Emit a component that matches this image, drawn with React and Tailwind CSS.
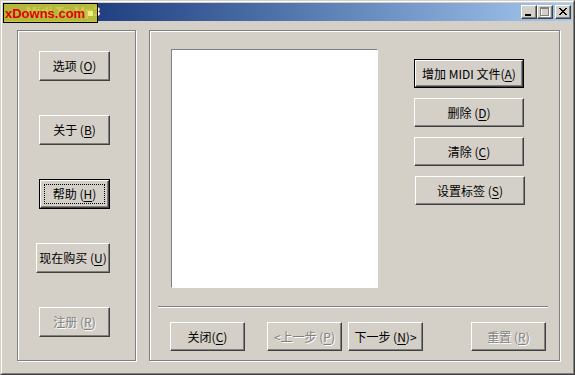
import React from 'react';

// Win2000 style raised button
function Btn({ children, w, h = 29, def, focus, disabled, className = '' }) {
  return (
    <div
      style={{ width: w, height: h }}
      className={`shrink-0 ${def ? 'border border-black' : ''} ${className}`}
    >
      <div
        className={`relative flex h-full w-full items-center justify-center whitespace-pre border border-white border-r-[#404040] border-b-[#404040] bg-[#d4d0c8] shadow-[inset_-1px_-1px_0_#808080] text-[12px] leading-none ${
          disabled ? 'text-[#808080] [text-shadow:1px_1px_0_#fff]' : 'text-black'
        }`}
      >
        {focus && <div className="absolute inset-[3px] border border-dotted border-black" />}
        {children}
      </div>
    </div>
  );
}

const K = ({ c }) => <u className="underline-offset-2">{c}</u>;

function CapBtn({ children, className = '' }) {
  return (
    <div className={`h-[14px] w-[16px] border border-white border-r-[#404040] border-b-[#404040] bg-[#d4d0c8] shadow-[inset_-1px_-1px_0_#808080] ${className}`}>
      {children}
    </div>
  );
}

const X_ROWS = ['11....11', '.11..11.', '..1111..', '...11...', '..1111..', '.11..11.', '11....11'];

function TitleBar() {
  return (
    <div className="flex h-[18px] items-center bg-linear-to-r from-[#0a246a] to-[#a6caf0]">
      <span className="ml-[23px] text-[13px] font-bold text-white font-['Liberation_Sans',sans-serif]">Midi To Mp3</span>
      <div className="ml-auto mr-[1px] flex items-center">
        <CapBtn>
          <svg width="14" height="12" shapeRendering="crispEdges">
            <rect x="3" y="8" width="6" height="2" fill="#000" />
          </svg>
        </CapBtn>
        <CapBtn>
          <svg width="14" height="12" shapeRendering="crispEdges">
            <g fill="none" stroke="#fff">
              <rect x="3.5" y="2.5" width="8" height="8" />
            </g>
            <rect x="3" y="2" width="8" height="1" fill="#fff" />
            <g fill="none" stroke="#808080">
              <rect x="2.5" y="1.5" width="8" height="8" />
            </g>
            <rect x="2" y="2" width="9" height="1" fill="#808080" />
          </svg>
        </CapBtn>
        <CapBtn className="ml-[2px]">
          <svg width="14" height="12" shapeRendering="crispEdges">
            {X_ROWS.flatMap((r, y) =>
              r.split('').map((ch, x) =>
                ch === '1' ? <rect key={`${x}-${y}`} x={x + 3} y={y + 2} width="1" height="1" fill="#000" /> : null
              )
            )}
          </svg>
        </CapBtn>
      </div>
    </div>
  );
}

const groupBox = 'border border-[#808080] shadow-[inset_1px_1px_0_#fff,1px_1px_0_#fff]';

export default function App() {
  return (
    <div className="relative h-[375px] w-[575px] border border-[#d4d0c8] border-r-[#404040] border-b-[#404040] bg-[#d4d0c8] font-['Noto_Sans_CJK_SC',sans-serif]">
      <div className="flex h-full flex-col border border-white border-r-[#808080] border-b-[#808080] p-px">
        <TitleBar />

        <div className="flex gap-[13px] pl-[14px] pt-[9px]">
          {/* left group */}
          <div className={`flex h-[331px] w-[119px] shrink-0 flex-col items-end gap-[34px] pr-[25px] pt-[20px] ${groupBox}`}>
            <Btn w={71} h={30}>选项 (<K c="O" />)</Btn>
            <Btn w={71} h={30}>关于 (<K c="B" />)</Btn>
            <Btn w={71} h={30} def focus>帮助 (<K c="H" />)</Btn>
            <Btn w={74} h={30}>现在购买 (<K c="U" />)</Btn>
            <Btn w={71} h={30} disabled>注册 (<K c="R" />)</Btn>
          </div>

          {/* right group */}
          <div className={`flex h-[331px] w-[411px] shrink-0 flex-col ${groupBox}`}>
            <div className="flex pl-[21px] pt-[18px]">
              <div className="h-[239px] w-[207px] shrink-0 border border-white border-t-[#808080] border-l-[#808080] bg-white" />
              <div className="ml-[36px] flex flex-col gap-[10px] pt-[10px]">
                <Btn w={110} def>增加 MIDI 文件(<K c="A" />)</Btn>
                <Btn w={110}>删除 (<K c="D" />)</Btn>
                <Btn w={110}>清除 (<K c="C" />)</Btn>
                <Btn w={110} className="ml-px">设置标签 (<K c="S" />)</Btn>
              </div>
            </div>

            <div className="ml-[8px] mt-[18px] h-[2px] w-[390px] border-t border-b border-t-[#808080] border-b-white" />

            <div className="mt-[14px] flex pl-[20px]">
              <Btn w={75}>关闭(<K c="C" />)</Btn>
              <Btn w={75} disabled className="ml-[22px]">{'<上一步 ('}<K c="P" />)</Btn>
              <Btn w={75} className="ml-[6px]">下一步 (<K c="N" />){'>'}</Btn>
              <Btn w={75} disabled className="ml-[48px]">重置 (<K c="R" />)</Btn>
            </div>
          </div>
        </div>
      </div>

      {/* watermark badge over the title */}
      <div className="absolute left-[2px] top-[2px] flex h-[20px] w-[95px] items-center border border-black bg-[rgba(200,200,56,0.9)] pl-px">
        <span className="text-[13px] font-bold leading-none text-[#e00000] font-['Liberation_Sans',sans-serif]">xDowns.com</span>
        <span className="ml-[3px] h-[5px] w-[5px] bg-[#f0f080]" />
      </div>
    </div>
  );
}
